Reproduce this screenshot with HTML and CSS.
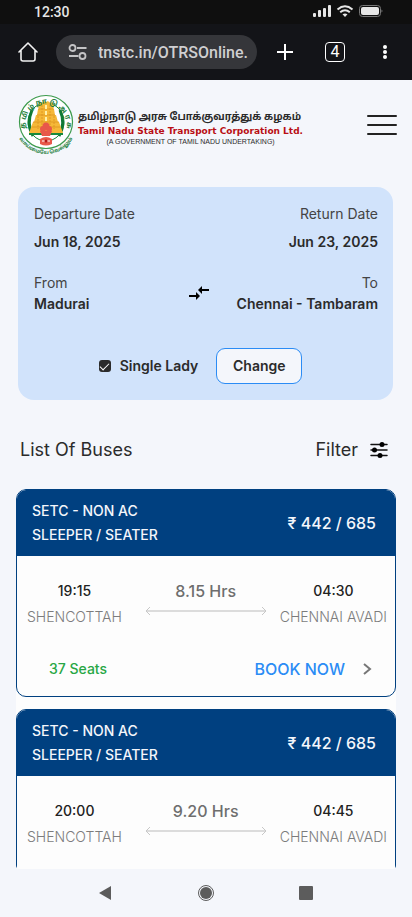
FILE: index.html
```
<!DOCTYPE html>
<html lang="en">
  <head>
    <meta charset="utf-8">
    <meta name="viewport" content="width=device-width, initial-scale=1">
    <title>TNSTC - List Of Buses</title>
    <link rel="stylesheet" href="styles.css">
  </head>
  <body>
    <div class="statusBar">
      <span>12:30</span>
      <svg width="72" height="14" viewBox="0 0 72 14">
        <g fill="#e6e6e6">
          <rect x="1" y="8" width="3" height="4" rx="1"/>
          <rect x="6" y="5" width="3" height="7" rx="1"/>
          <rect x="11" y="3" width="3" height="9" rx="1"/>
          <rect x="16" y="0" width="3" height="12" rx="1"/>
          <rect x="49" y="2" width="18" height="8" rx="2"/>
          <path d="M69.500 4.500q2 1.500 0 3z" opacity=".5"/>
          <path d="M30.500 9.300 33 11.900l2.500-2.600q-2.500-1.800-5 0z"/>
        </g>
        <g fill="none" stroke="#e6e6e6" stroke-width="2">
          <path d="M25.500 4.400q7.500-6.400 15 0"/>
          <path d="M28.200 7.300q4.800-4 9.600 0"/>
        </g>
        <rect x="47.500" y=".5" width="21" height="11" rx="3" fill="none" stroke="#777"/>
      </svg>
    </div>

    <div class="browserBar">
      <button class="iconBtn home" aria-label="Home">
        <svg width="20" height="20" viewBox="0 0 20 20" fill="none" stroke="#f2f2f2" stroke-width="1.600" stroke-linejoin="round" stroke-linecap="round">
          <path d="M1 10 10 1l9 9M3 8.500V17q0 2 2 2h10q2 0 2-2V8.500"/>
        </svg>
      </button>
      <label class="address">
        <svg width="20" height="16" viewBox="0 0 20 16" fill="none" stroke="#c4c4c6" stroke-width="1.800">
          <circle cx="4.500" cy="4" r="3"/>
          <path d="M9 4h9.500M1 12h9.500"/>
          <circle cx="14.500" cy="12" r="3"/>
        </svg>
        <input type="text" value="tnstc.in/OTRSOnline." aria-label="Address">
      </label>
      <div class="tools">
        <button class="iconBtn" aria-label="New tab">
          <svg width="16" height="16" viewBox="0 0 16 16" stroke="#fff" stroke-width="2"><path d="M8 0v16M0 8h16"/></svg>
        </button>
        <button class="iconBtn"><span class="tabs">4</span></button>
        <button class="iconBtn" aria-label="Menu">
          <svg width="6" height="16" viewBox="0 0 6 16" fill="#fff">
            <circle cx="3" cy="3" r="2"/><circle cx="3" cy="8" r="2"/><circle cx="3" cy="13" r="2"/>
          </svg>
        </button>
      </div>
    </div>

    <header class="siteHeader">
      <a class="brand" href="#">
        <svg class="emblem" width="56" height="62" viewBox="0 0 56 62">
          <defs>
            <path id="upper" d="M11 43A21 21 0 1 1 45 43"/>
            <path id="lower" d="M1 44A31 31 0 0 0 55 44"/>
          </defs>
          <circle cx="28" cy="28" r="26.500" fill="#fff" stroke="#3c9a4c" stroke-width="1.200"/>
          <ellipse cx="28" cy="28" rx="18" ry="19" fill="#fff" stroke="#168a3c" stroke-width="1"/>
          <path d="M14 16q-6 14 1 26M42 16q6 14-1 26" fill="none" stroke="#0f7a34" stroke-width="3"/>
          <g fill="#f5b838">
            <path d="M21 10h14l1 3-1 2H21l-1-2z"/>
            <path d="M20 15h16l1 6H19zM18 21h20l2 7H16zM15 28h26l4 11H11z"/>
            <path d="M21 10l1-2 2 1 2-2 2 1 2-1 2 2 2-1 1 2z"/>
          </g>
          <g stroke="#dc9420" stroke-width=".8" fill="none">
            <path d="M20 15h16M19 21h18M15 28h26M14 33h28"/>
            <path d="M24 11v22M32 11v22M20 22v13M36 22v13" stroke-dasharray="2 1"/>
          </g>
          <path d="M28 11v20" stroke="#fff1a8" stroke-width="2" stroke-dasharray="4 2"/>
          <path d="M11 39h34v2H11z" fill="#168a3c"/>
          <g fill="#e8584a">
            <circle cx="28" cy="32" r="3.500"/>
            <circle cx="25" cy="35" r="3"/>
            <circle cx="31" cy="35" r="3"/>
            <path d="M22 37h12l-2 5h-8z"/>
            <path d="M22 45q6-4 12 0v5q-6 3-12 0z"/>
          </g>
          <path d="M23 42.500h10M24 47h8" stroke="#fff" stroke-width="1"/>
          <circle cx="28" cy="47" r="1.500" fill="#b41818"/>
          <text class="emblemTop"><textPath href="#upper" startOffset="50%">த மி ழ் நா டு அ ர சு</textPath></text>
          <text class="emblemBottom"><textPath href="#lower" startOffset="50%">வாய்மையே வெல்லும்</textPath></text>
        </svg>
        <span class="brandText">
          <span class="tamil" lang="ta">தமிழ்நாடு அரசு போக்குவரத்துக் கழகம்</span>
          <span class="english">Tamil Nadu State Transport Corporation Ltd.</span>
          <span class="govt">(A GOVERNMENT OF TAMIL NADU UNDERTAKING)</span>
        </span>
      </a>
      <button class="hamburger" aria-label="Open menu"><i></i><i></i><i></i></button>
    </header>

    <section class="trip">
      <dl class="tripRow dates">
        <div><dt>Departure Date</dt><dd>Jun 18, 2025</dd></div>
        <div><dt>Return Date</dt><dd>Jun 23, 2025</dd></div>
      </dl>
      <dl class="tripRow places">
        <div><dt>From</dt><dd>Madurai</dd></div>
        <div><dt>To</dt><dd>Chennai - Tambaram</dd></div>
        <svg class="swap" width="20" height="14" viewBox="0 0 20 14" fill="#000">
          <path d="M20 3v2h-7v3L9 4l4-4v3z"/>
          <path d="M0 9v2h7v3l4-4-4-4v3z"/>
        </svg>
      </dl>
      <div class="tripActions">
        <label class="check"><input type="checkbox" checked>Single Lady</label>
        <button class="change">Change</button>
      </div>
    </section>

    <div class="listHead">
      <h1>List Of Buses</h1>
      <button class="filter">Filter
        <svg width="18" height="16" viewBox="0 0 18 16" stroke="#111" stroke-width="1.500" stroke-linecap="round">
          <path d="M1 2.500h16M1 8h16M1 13.500h16"/>
          <g fill="#000" stroke="none"><circle cx="12" cy="2.500" r="2.500"/><circle cx="4.500" cy="8" r="2.500"/><circle cx="10" cy="13.500" r="2.500"/></g>
        </svg>
      </button>
    </div>

    <main class="buses">
      <article class="bus">
        <div class="busHead">
          <h2>SETC - NON AC<br>SLEEPER / SEATER</h2>
          <span class="fare">₹ 442 / 685</span>
        </div>
        <div class="busBody">
          <div class="route">
            <div class="stop"><b>19:15</b><span>SHENCOTTAH</span></div>
            <div class="duration">
              <span>8.15 Hrs</span>
              <svg width="122" height="12" viewBox="0 0 122 12" fill="none">
                <path d="M1 6h120" stroke="#dcdcdc" stroke-width="2"/>
                <path d="M5 2 1 6l4 4M117 2l4 4-4 4" stroke="#c8c8c8"/>
              </svg>
            </div>
            <div class="stop"><b>04:30</b><span>CHENNAI AVADI</span></div>
          </div>
          <div class="booking">
            <span class="seats">37 Seats</span>
            <a class="book" href="#">BOOK NOW
              <svg width="9" height="14" viewBox="0 0 9 14" fill="none" stroke="#777" stroke-width="2"><path d="M1 2l6 5-6 5"/></svg>
            </a>
          </div>
        </div>
      </article>

      <article class="bus">
        <div class="busHead">
          <h2>SETC - NON AC<br>SLEEPER / SEATER</h2>
          <span class="fare">₹ 442 / 685</span>
        </div>
        <div class="busBody">
          <div class="route">
            <div class="stop"><b>20:00</b><span>SHENCOTTAH</span></div>
            <div class="duration">
              <span>9.20 Hrs</span>
              <svg width="122" height="12" viewBox="0 0 122 12" fill="none">
                <path d="M1 6h120" stroke="#dcdcdc" stroke-width="2"/>
                <path d="M5 2 1 6l4 4M117 2l4 4-4 4" stroke="#c8c8c8"/>
              </svg>
            </div>
            <div class="stop"><b>04:45</b><span>CHENNAI AVADI</span></div>
          </div>
        </div>
      </article>
    </main>

    <nav class="phoneNav">
      <button class="iconBtn" aria-label="Back">
        <svg width="16" height="16" viewBox="0 0 16 16" fill="#5c5c5c"><path d="M13 1v14L1 8z"/></svg>
      </button>
      <button class="iconBtn" aria-label="Home screen">
        <svg width="16" height="16" viewBox="0 0 16 16"><circle cx="8" cy="8" r="7.500" fill="none" stroke="#5c5c5c"/><circle cx="8" cy="8" r="6" fill="#5c5c5c"/></svg>
      </button>
      <button class="iconBtn" aria-label="Recent apps">
        <svg width="16" height="16" viewBox="0 0 16 16" fill="#5c5c5c"><rect x="1" y="1" width="14" height="14" rx="1"/></svg>
      </button>
    </nav>
  </body>
</html>
```
FILE: styles.css
```
* {
  box-sizing: border-box;
}

body {
  margin: 0;
  height: 100vh;
  display: flex;
  flex-direction: column;
  background-color: #f4f6fb;
  color: #2b2b2b;
  font-family: Inter, sans-serif;
  font-size: 14px;
  line-height: 24px;
}

body > * {
  flex-shrink: 0;
}

button {
  padding: 0;
  border: 0;
  background: none;
  color: inherit;
  font: inherit;
  cursor: pointer;
}

svg {
  display: block;
}

h1, h2, dl, dd {
  margin: 0;
}

/* Phone status bar and browser toolbar */
.statusBar {
  display: flex;
  align-items: center;
  justify-content: space-between;
  height: 24px;
  padding: 0 28px 0 34px;
  background-color: #0f0f0f;
  color: #e6e6e6;
  font-family: Roboto, sans-serif;
  font-weight: 500;
}

.browserBar {
  display: flex;
  align-items: center;
  height: 56px;
  background-color: #131418;
  font-family: Roboto, sans-serif;
}

.iconBtn {
  display: flex;
  align-items: center;
  justify-content: center;
}

.home {
  flex: none;
  width: 56px;
}

.address {
  flex: 1;
  min-width: 0;
  display: flex;
  align-items: center;
  gap: 10px;
  height: 34px;
  padding: 0 4px 0 12px;
  border-radius: 17px;
  background-color: #35363a;
}

.address svg {
  flex: none;
}

.address input {
  flex: 1;
  min-width: 0;
  padding: 0;
  border: 0;
  background: none;
  color: #cfcfd1;
  font: 500 16px Roboto, sans-serif;
}

.tools {
  flex: none;
  display: grid;
  grid-template-columns: repeat(3, 50px);
  padding: 0 2px 0 3px;
}

.tabs {
  width: 20px;
  height: 20px;
  border: 1px solid #fff;
  border-radius: 4px;
  color: #fff;
  font-size: 16px;
  line-height: 18px;
}

/* Site header */
.siteHeader {
  display: flex;
  align-items: center;
  justify-content: space-between;
  height: 90px;
  padding: 0 15px 0 18px;
}

.brand {
  display: flex;
  align-items: center;
  gap: 4px;
  color: inherit;
  text-decoration: none;
}

.emblem text {
  text-anchor: middle;
  font-family: "Noto Sans Tamil", sans-serif;
  font-weight: bold;
  fill: #23803c;
}

.emblemTop {
  font-size: 7px;
}

.emblemBottom {
  font-size: 5px;
}

.brandText {
  display: flex;
  flex-direction: column;
  padding-top: 8px;
  white-space: nowrap;
}

.tamil {
  font-family: "Noto Sans Tamil", sans-serif;
  font-size: 10px;
  font-weight: bold;
  line-height: 14px;
}

.english {
  color: #b90f14;
  font-family: "DejaVu Sans", sans-serif;
  font-size: 9px;
  font-weight: bold;
  line-height: 12px;
}

.govt {
  text-align: center;
  font-family: "Liberation Sans", sans-serif;
  font-size: 7px;
  line-height: 10px;
}

.hamburger {
  display: flex;
  flex-direction: column;
  gap: 7px;
  width: 30px;
}

.hamburger i {
  height: 2px;
  border-radius: 1px;
  background-color: #222;
}

/* Trip summary */
.trip {
  margin: 17px 19px 0 18px;
  padding: 15px 15px 16px 16px;
  border-radius: 16px;
  background-color: #d1e3fb;
}

.tripRow {
  position: relative;
  display: flex;
  justify-content: space-between;
}

.tripRow div:nth-child(2) {
  text-align: right;
}

.tripRow dt {
  color: #444;
}

.tripRow dd {
  font-weight: 600;
}

.dates {
  margin-bottom: 18px;
}

.dates dd {
  margin-top: 4px;
}

.places {
  line-height: 21px;
}

/* sits between the two places */
.swap {
  position: absolute;
  left: 48%;
  top: 50%;
  transform: translate(-50%, -50%);
}

.tripActions {
  display: flex;
  align-items: center;
  justify-content: center;
  gap: 18px;
  margin-top: 34px;
  padding-right: 11px;
}

.check {
  display: flex;
  align-items: center;
  gap: 9px;
  font-weight: 600;
}

.check input {
  appearance: none;
  width: 12px;
  height: 12px;
  margin: 0;
  border-radius: 3px;
  background-color: #fff;
}

.check input:checked {
  display: flex;
  justify-content: center;
  padding-top: 3px;
  background-color: #2b2b2b;
}

.check input:checked::before {
  content: '';
  width: 8px;
  height: 4px;
  border: solid #fff;
  border-width: 0 0 1px 1px;
  transform: rotate(-45deg);
}

.change {
  width: 86px;
  height: 36px;
  border: 1px solid #2b8cf5;
  border-radius: 9px;
  background-color: #f4f6fb;
  font-weight: 600;
}

/* Bus list */
.listHead {
  display: flex;
  align-items: center;
  justify-content: space-between;
  padding: 38px 24px 27px 20px;
  font-size: 18px;
}

.listHead h1 {
  font-size: 18px;
  font-weight: 400;
}

.filter {
  display: flex;
  align-items: center;
  gap: 12px;
}

.buses {
  flex: 1 1 0;
  min-height: 0;
  margin: 0 16px;
  overflow: hidden;
  border-radius: 9px 9px 4px 4px;
  background-color: #fdfdfd;
}

.bus {
  min-height: 208px;
  margin-bottom: 12px;
  border: 1px solid #004080;
  border-radius: 10px;
  overflow: hidden;
}

.busHead {
  display: flex;
  align-items: center;
  justify-content: space-between;
  padding: 9px 19px 9px 15px;
  background-color: #004080;
  color: #f4f6fb;
}

.busHead h2 {
  font-size: 14px;
  font-weight: 500;
}

.fare {
  font-size: 16px;
  font-weight: 500;
}

.busBody {
  padding: 23px 8px 15px 10px;
}

.route {
  display: grid;
  grid-template-columns: auto 1fr auto;
  gap: 13px;
}

.stop {
  display: flex;
  flex-direction: column;
  align-items: center;
  gap: 2px;
  color: #7c7c7c;
  font-weight: 300;
}

.stop b {
  color: #222;
  font-weight: 500;
}

.duration {
  display: flex;
  flex-direction: column;
  align-items: center;
  gap: 2px;
  justify-self: end;
  color: #6e6e6e;
  font-size: 16px;
  font-weight: 500;
}

.booking {
  display: flex;
  justify-content: space-between;
  margin-top: 28px;
  padding: 0 15px 0 22px;
}

.seats {
  color: #28a745;
  font-weight: 500;
}

.book {
  display: flex;
  align-items: center;
  gap: 18px;
  color: #2b8cf5;
  font-size: 16px;
  font-weight: 500;
  text-decoration: none;
}

/* Phone buttons */
.phoneNav {
  display: flex;
  align-items: center;
  justify-content: center;
  gap: 84px;
  height: 48px;
}
```
